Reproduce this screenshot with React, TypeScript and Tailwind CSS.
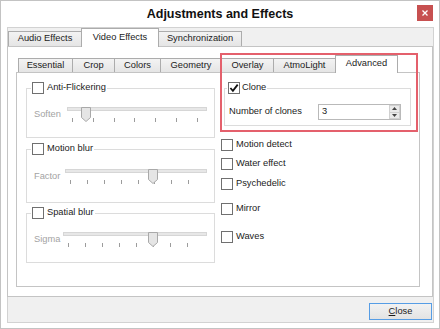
import React from "react";

type TabProps = { w: string; active?: boolean; inner?: boolean; children: React.ReactNode };

const Tab = ({ w, active, inner, children }: TabProps) => {
	if (active) {
		return (
			<div
				className={`${w} ${inner ? "h-[18px]" : "h-[19px]"} relative z-10 -mb-px -ml-px flex items-center justify-center border border-b-0 border-[#acacac] bg-white pb-[1px]`}
			>
				{children}
			</div>
		);
	}
	return (
		<div
			className={`${w} ${inner ? "h-[14px]" : "h-[15px]"} -ml-px flex items-center justify-center border border-b-0 border-[#acacac] bg-linear-to-b from-[#f3f3f3] to-[#e5e5e5] first:ml-0`}
		>
			{children}
		</div>
	);
};

const Check = ({ checked = false }: { checked?: boolean }) => (
	<span className="flex h-[12px] w-[12px] shrink-0 items-center justify-center border border-[#707070] bg-white">
		{checked && (
			<svg width="10" height="10" viewBox="0 0 10 10">
				<path d="M1.4 5 L3.9 7.8 L8.7 1.6" fill="none" stroke="#111" strokeWidth="1.8" />
			</svg>
		)}
	</span>
);

type SliderProps = { thumb: number; ticks: number; tickPad: string };

const Slider = ({ thumb, ticks, tickPad }: SliderProps) => (
	<div className="relative h-[21px]">
		<div className="mt-[5px] h-[4px] border border-[#d6d6d6] bg-[#e7e7e7]" />
		<div className={`mt-[7px] flex h-[4px] justify-between pl-[5px] ${tickPad}`}>
			{Array.from({ length: ticks }).map((_, i) => (
				<span key={i} className="h-[4px] w-px bg-[#9c9c9c]" />
			))}
		</div>
		{/* thumb sits over the track */}
		<svg className="absolute top-0" style={{ left: thumb }} width="10" height="15" viewBox="0 0 10 15">
			<path d="M0.5 0.5 H9.5 V10.5 L5 14.5 L0.5 10.5 Z" fill="#e5e5e5" stroke="#a9a9a9" />
		</svg>
	</div>
);

type GroupProps = {
	title: string;
	label: string;
	gap: string;
	thumb: number;
	ticks: number;
	tickPad: string;
	frame: string;
	top: string;
};

const SliderGroup = ({ title, label, gap, thumb, ticks, tickPad, frame, top }: GroupProps) => (
	<fieldset className={`border border-[#dcdcdc] ${frame}`}>
		<legend className="ml-[4px] px-[1px]">
			<span className="flex h-[12px] items-center gap-[3px]">
				<Check />
				<span>{title}</span>
			</span>
		</legend>
		<div className={`flex items-center pl-[7px] pr-[7px] ${top}`}>
			<span className="text-[#a3a3a3]">{label}</span>
			<div className={`flex-1 ${gap}`}>
				<Slider thumb={thumb} ticks={ticks} tickPad={tickPad} />
			</div>
		</div>
	</fieldset>
);

const Option = ({ label, space }: { label: string; space: string }) => (
	<div className={`flex h-[12px] items-center gap-[3px] ${space}`}>
		<Check />
		<span>{label}</span>
	</div>
);

export default function App() {
	return (
		<div className="relative flex h-[329px] w-[440px] flex-col overflow-hidden border border-[#c3c3c3] bg-white font-['Liberation_Sans',Arial,sans-serif] text-[9.3px] leading-none text-[#1b1b1b]">
			{/* title bar */}
			<div className="relative flex h-[26px] shrink-0 items-center justify-center">
				<span className="text-[12.5px] font-bold text-[#111]">Adjustments and Effects</span>
				<div className="absolute right-[6px] top-[4px] flex h-[16px] w-[16px] items-center justify-center bg-[#c75050]">
					<svg width="6" height="6" viewBox="0 0 6 6">
						<path d="M0.5 0.5 L5.5 5.5 M5.5 0.5 L0.5 5.5" stroke="#fff" strokeWidth="1.3" />
					</svg>
				</div>
			</div>

			<div className="ml-[6px] flex h-[296px] w-[427px] flex-col border border-[#d2d2d2] bg-[#f0f0f0]">
				<div className="flex h-[18px] shrink-0 items-end">
					<Tab w="w-[74px]">Audio Effects</Tab>
					<Tab w="w-[78px]" active>
						Video Effects
					</Tab>
					<Tab w="w-[84px]">Synchronization</Tab>
				</div>

				<div className="-ml-px flex h-[251px] flex-col border border-[#c4c4c4] bg-white pb-[9px] pl-[8px] pr-[12px] pt-[8px]">
					<div className="flex h-[17px] shrink-0 items-end pl-[2px]">
						<Tab w="w-[55px]" inner>
							Essential
						</Tab>
						<Tab w="w-[43px]" inner>
							Crop
						</Tab>
						<Tab w="w-[47px]" inner>
							Colors
						</Tab>
						<Tab w="w-[62px]" inner>
							Geometry
						</Tab>
						<Tab w="w-[53px]" inner>
							Overlay
						</Tab>
						<Tab w="w-[63px]" inner>
							AtmoLight
						</Tab>
						<Tab w="w-[63px]" inner active>
							Advanced
						</Tab>
					</div>

					<div className="flex flex-1 gap-[6px] border border-[#c4c4c4] bg-white pl-[9px] pt-[9px]">
						<div className="flex w-[189px] flex-col">
							<SliderGroup
								title="Anti-Flickering"
								label="Soften"
								gap="ml-[6px]"
								thumb={14}
								ticks={7}
								tickPad="pr-[9px]"
								frame="pb-[9px]"
								top="mt-[8px]"
							/>
							<SliderGroup
								title="Motion blur"
								label="Factor"
								gap="ml-[5px]"
								thumb={83}
								ticks={8}
								tickPad="pr-[18px]"
								frame="mt-[5px] pb-[12px]"
								top="mt-[9px]"
							/>
							<SliderGroup
								title="Spatial blur"
								label="Sigma"
								gap="ml-[3px]"
								thumb={85}
								ticks={8}
								tickPad="pr-[19px]"
								frame="mt-[4px] pb-[9px]"
								top="mt-[8px]"
							/>
						</div>

						<div className="flex flex-col">
							<fieldset className="ml-[3px] w-[187px] border border-[#dcdcdc] pb-[5px]">
								<legend className="ml-[2px] px-[1px]">
									<span className="flex h-[12px] items-center gap-[2px]">
										<Check checked />
										<span>Clone</span>
									</span>
								</legend>
								<div className="mt-[10px] flex h-[16px] items-center pl-[4px]">
									<span>Number of clones</span>
									<div className="ml-auto mr-[9px] flex h-[16px] w-[83px] items-center border border-[#b9b9b9] bg-white pl-[3px]">
										<span className="flex-1">3</span>
										<div className="flex h-[14px] w-[11px] flex-col border border-[#d0d0d0] bg-[#eaeaea]">
											<div className="flex flex-1 items-center justify-center border-b border-[#d0d0d0]">
												<svg width="5" height="3" viewBox="0 0 5 3">
													<path d="M0 3 L2.5 0 L5 3 Z" fill="#444" />
												</svg>
											</div>
											<div className="flex flex-1 items-center justify-center">
												<svg width="5" height="3" viewBox="0 0 5 3">
													<path d="M0 0 L2.5 3 L5 0 Z" fill="#444" />
												</svg>
											</div>
										</div>
									</div>
								</div>
							</fieldset>

							<Option label="Motion detect" space="mt-[13px]" />
							<Option label="Water effect" space="mt-[7px]" />
							<Option label="Psychedelic" space="mt-[8px]" />
							<Option label="Mirror" space="mt-[13px]" />
							<Option label="Waves" space="mt-[16px]" />
						</div>
					</div>
				</div>

				<div className="flex flex-1 items-start justify-end pr-[1px] pt-[6px]">
					<button className="flex h-[17px] w-[63px] items-center justify-center border border-[#569de5] bg-linear-to-b from-[#f2f2f2] to-[#e3e3e3] text-[#1b1b1b]">
						<span>
							<span className="underline">C</span>lose
						</span>
					</button>
				</div>
			</div>

			{/* annotation frame drawn over the dialog */}
			<div className="pointer-events-none absolute left-[219px] top-[52px] h-[79px] w-[198px] border-2 border-[#e4606c]" />
		</div>
	);
}
